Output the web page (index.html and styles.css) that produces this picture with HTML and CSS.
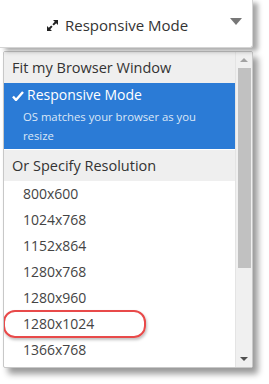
FILE: index.html
```html
<!DOCTYPE html>
<html lang="en">
<head>
  <meta charset="UTF-8">
  <title>Responsive Mode</title>
  <link rel="stylesheet" href="styles.css">
</head>
<body>
  <div class="mode-button">
    <span class="mode-label">
      <svg class="resize-icon" width="11" height="11" viewBox="0 0 11 11">
        <path d="M6 0h5v5l-1.8-1.8-2.4 2.4-1.4-1.4 2.4-2.4z" fill="#222"/>
        <path d="M0 11v-5l1.8 1.8 2.4-2.4 1.4 1.4-2.4 2.4 1.8 1.8z" fill="#222"/>
      </svg>
      Responsive Mode
    </span>
    <span class="caret"></span>
  </div>

  <div class="menu">
    <div class="menu-list">
      <div class="menu-header">Fit my Browser Window</div>
      <div class="menu-item selected">
        <div class="item-title">
          <svg class="check" width="12" height="10" viewBox="0 0 12 10">
            <path d="M1 5.5l3 3.5L11 1" fill="none" stroke="#fff" stroke-width="2.4" stroke-linejoin="round"/>
          </svg>Responsive Mode
        </div>
        <div class="item-note">OS matches your browser as you resize</div>
      </div>
      <div class="menu-header second">Or Specify Resolution</div>
      <div class="menu-item">800x600</div>
      <div class="menu-item">1024x768</div>
      <div class="menu-item">1152x864</div>
      <div class="menu-item">1280x768</div>
      <div class="menu-item">1280x960</div>
      <div class="menu-item highlight">1280x1024</div>
      <div class="menu-item">1366x768</div>
    </div>
    <div class="scrollbar">
      <span class="arrow up"></span>
      <div class="track"><div class="thumb"></div></div>
      <span class="arrow down"></span>
    </div>
  </div>
</body>
</html>
```

FILE: styles.css
```css
body {
  margin: 0;
  background: #fff;
  font-family: "Open Sans", "Noto Sans", sans-serif;
  color: #333;
  width: 269px;
  height: 384px;
  overflow: hidden;
}

.mode-button {
  width: 252px;
  height: 47px;
  border-right: 1px solid #d4d4d4;
  border-bottom: 1px solid #d4d4d4;
  border-radius: 0 0 3px 0;
  box-shadow: 5px 3px 5px rgba(0, 0, 0, 0.35);
  display: flex;
  align-items: center;
  position: relative;
  background: #fff;
}

.mode-label {
  font-size: 15px;
  color: #333;
  display: flex;
  align-items: center;
  gap: 7px;
  padding-left: 47px;
  margin-top: 2px;
}

.resize-icon {
  margin-top: 1px;
}

.caret {
  position: absolute;
  right: 10px;
  top: 18px;
  width: 0;
  height: 0;
  border-left: 6px solid transparent;
  border-right: 6px solid transparent;
  border-top: 7px solid #777;
}

.menu {
  margin: 3px 0 0 3px;
  width: 248px;
  height: 315px;
  border: 1px solid #c8c8c8;
  border-radius: 2px;
  box-shadow: 5px 6px 6px rgba(0, 0, 0, 0.4);
  display: flex;
  background: #fff;
  overflow: hidden;
}

.menu-list {
  flex: 1;
}

.menu-header {
  background: #efefef;
  height: 31px;
  line-height: 31px;
  padding-left: 8px;
  font-size: 14.5px;
  color: #333;
}

.menu-header.second {
  margin-top: 1px;
}

.menu-item {
  height: 26px;
  line-height: 26px;
  padding-left: 19px;
  font-size: 14px;
  color: #444;
}

.menu-item.selected {
  height: 62px;
  padding: 0 0 4px 0;
  background: #2b7bd6;
  color: #fff;
}

.item-title {
  font-size: 14px;
  line-height: 24px;
  padding-left: 8px;
  display: flex;
  align-items: center;
}

.check {
  margin-right: 3px;
  margin-top: 1px;
}

.item-note {
  font-size: 11.3px;
  line-height: 19px;
  padding-left: 19px;
  width: 180px;
  color: #dbe7f6;
}

.highlight {
  position: relative;
}

.highlight::after {
  content: "";
  position: absolute;
  left: -1px;
  top: -1px;
  width: 139px;
  height: 24px;
  border: 2.5px solid #e84a4a;
  border-radius: 12px;
  box-shadow: 1px 2px 3px rgba(0, 0, 0, 0.25);
}

.scrollbar {
  width: 16px;
  background: #f0f0f0;
  border-left: 1px solid #e4e4e4;
  display: flex;
  flex-direction: column;
  align-items: center;
}

.arrow {
  width: 0;
  height: 0;
  border-left: 4px solid transparent;
  border-right: 4px solid transparent;
  margin: 6px 0;
}

.arrow.up {
  border-bottom: 4px solid #a3a3a3;
}

.arrow.down {
  border-top: 4px solid #505050;
}

.track {
  flex: 1;
  width: 13px;
}

.thumb {
  height: 200px;
  background: #c1c1c1;
}
```
